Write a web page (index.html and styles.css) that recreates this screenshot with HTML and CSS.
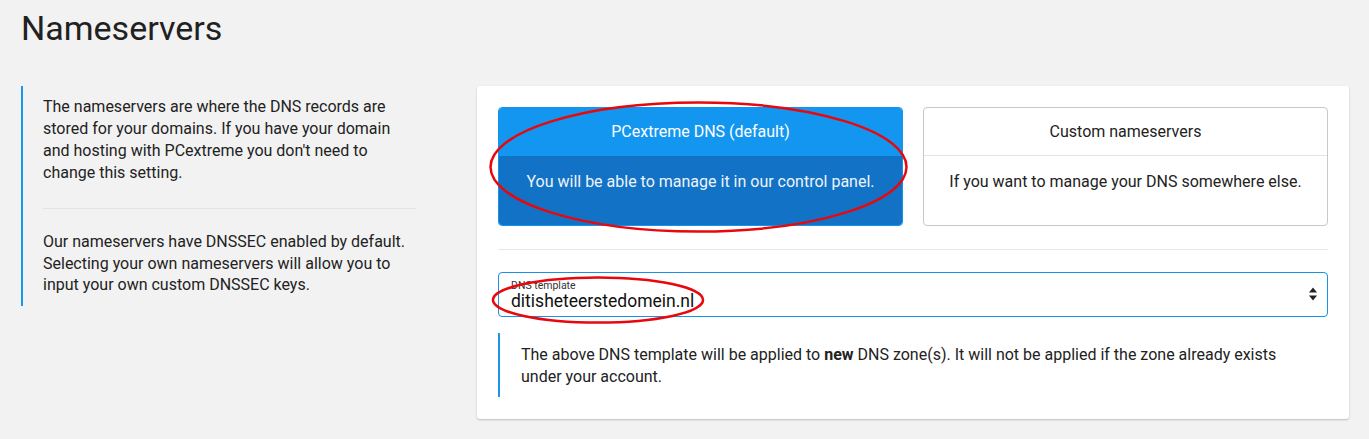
FILE: index.html
```html
<!DOCTYPE html>
<html lang="en">
<head>
<meta charset="utf-8">
<title>Nameservers</title>
<link rel="stylesheet" href="styles.css">
</head>
<body>
<div class="page">
  <h1 class="title">Nameservers</h1>
  <div class="layout">
    <aside class="info">
      <p class="info-text">The nameservers are where the DNS records are stored for your domains. If you have your domain and hosting with PCextreme you don't need to change this setting.</p>
      <hr class="info-rule">
      <p class="info-text">Our nameservers have DNSSEC enabled by default. Selecting your own nameservers will allow you to input your own custom DNSSEC keys.</p>
    </aside>
    <section class="card">
      <div class="options">
        <div class="option option-active">
          <div class="option-head">PCextreme DNS (default)</div>
          <div class="option-body">You will be able to manage it in our control panel.</div>
        </div>
        <div class="option">
          <div class="option-head">Custom nameservers</div>
          <div class="option-body">If you want to manage your DNS somewhere else.</div>
        </div>
      </div>
      <hr class="card-rule">
      <div class="select">
        <div class="select-text">
          <span class="select-label">DNS template</span>
          <span class="select-value">ditisheteerstedomein.nl</span>
        </div>
        <svg class="select-arrows" width="10" height="16" viewBox="0 0 10 16" aria-hidden="true">
          <path d="M5 1.5 L9 6.5 H1 Z" fill="#222"/>
          <path d="M5 14.5 L9 9.5 H1 Z" fill="#222"/>
        </svg>
      </div>
      <div class="note">The above DNS template will be applied to <strong>new</strong> DNS zone(s). It will not be applied if the zone already exists under your account.</div>
    </section>
  </div>
  <svg class="annotations" width="1369" height="439" viewBox="0 0 1369 439" aria-hidden="true">
    <ellipse cx="698.5" cy="167" rx="208" ry="64.5" fill="none" stroke="#e8080c" stroke-width="2.5"/>
    <ellipse cx="598" cy="300" rx="105" ry="22.5" fill="none" stroke="#e8080c" stroke-width="2.5"/>
  </svg>
</div>
</body>
</html>
```
FILE: styles.css
```css
html, body {
  margin: 0;
  padding: 0;
}
body {
  background: #f2f2f2;
  font-family: Roboto, "Noto Sans", "Liberation Sans", sans-serif;
  color: #212121;
  width: 1369px;
  height: 439px;
  overflow: hidden;
}
.page {
  position: relative;
  padding: 0 20px 0 21px;
}
.title {
  margin: 0;
  padding-top: 8px;
  height: 80px;
  box-sizing: border-box;
  font-size: 34px;
  font-weight: 400;
  line-height: 40px;
  color: #212121;
  padding-left: 0;
}
.layout {
  display: flex;
  align-items: flex-start;
  margin-top: 6px;
  gap: 61px;
}
.info {
  width: 373px;
  flex: none;
  border-left: 2px solid #1a96ec;
  padding: 10px 0 10px 20px;
}
.info-text {
  margin: 0;
  font-size: 16px;
  line-height: 21.9px;
  color: #222;
}
.info-rule {
  border: 0;
  border-top: 1px solid #e2e2e2;
  margin: 24px 0 22px;
}
.card {
  flex: none;
  width: 872px;
  box-sizing: border-box;
  background: #fff;
  border-radius: 3px;
  box-shadow: 0 1px 2px rgba(0, 0, 0, 0.22);
  padding: 21px 21px 22px;
}
.options {
  display: grid;
  grid-template-columns: 1fr 1fr;
  gap: 20px;
}
.option {
  border: 1px solid #c8c8c8;
  border-radius: 4px;
  height: 119px;
  box-sizing: border-box;
  display: flex;
  flex-direction: column;
  overflow: hidden;
  font-size: 16px;
  color: #222;
}
.option-head {
  height: 47px;
  flex: none;
  display: flex;
  align-items: center;
  justify-content: center;
  border-bottom: 1px solid #e4e4e4;
}
.option-body {
  flex: 1;
  display: flex;
  align-items: center;
  justify-content: center;
  padding-bottom: 18px;
}
.option-active {
  border-color: #1294ee;
  color: #fff;
}
.option-active .option-head {
  background: #1396ef;
  border-bottom-color: #1396ef;
}
.option-active .option-body {
  background: #1272c5;
  color: #eef4fb;
}
.card-rule {
  border: 0;
  border-top: 1px solid #e6e6e6;
  margin: 23px 0 22px;
}
.select {
  height: 45px;
  box-sizing: border-box;
  border: 1px solid #1a90e6;
  border-radius: 4px;
  display: flex;
  align-items: center;
  justify-content: space-between;
  padding: 0 9px 0 12px;
}
.select-text {
  display: flex;
  flex-direction: column;
  padding-top: 2px;
}
.select-label {
  font-size: 10.5px;
  line-height: 11px;
  color: #333;
}
.select-value {
  font-size: 17.5px;
  line-height: 21px;
  color: #111;
}
.select-arrows {
  display: block;
  margin-top: -1px;
}
.note {
  margin-top: 16px;
  border-left: 2px solid #1a96ec;
  padding: 11px 20px 9px 21px;
  font-size: 16px;
  line-height: 22px;
  color: #222;
}
.note strong {
  font-weight: 700;
}
.annotations {
  position: absolute;
  left: 0;
  top: 0;
  pointer-events: none;
}
```
